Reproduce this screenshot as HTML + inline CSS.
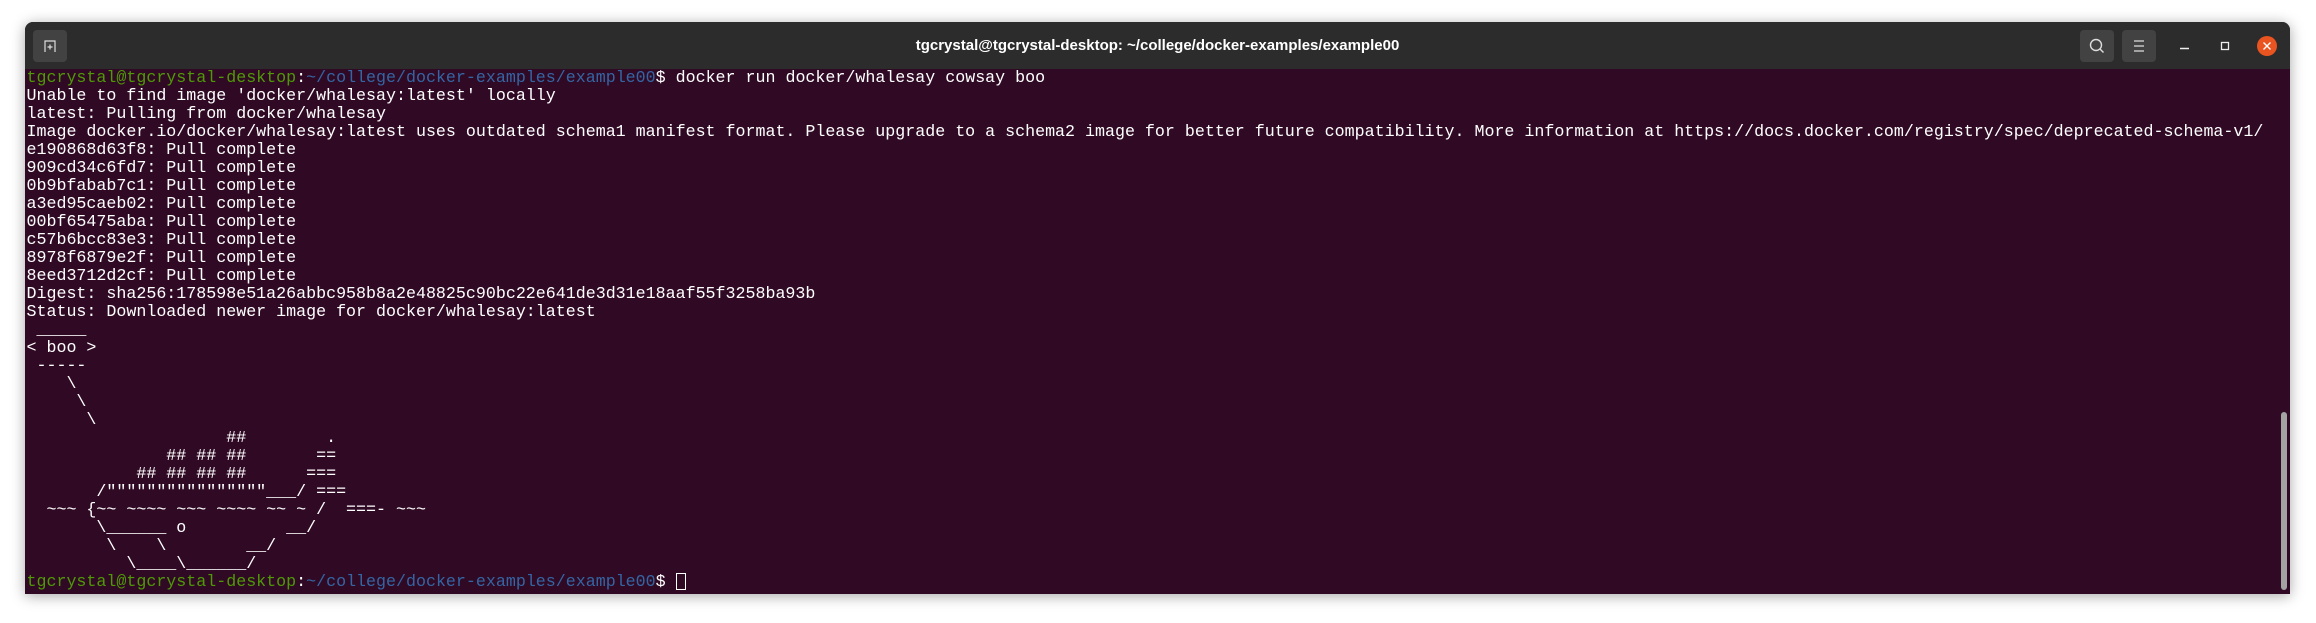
<!DOCTYPE html>
<html><head><meta charset="utf-8"><style>
html,body{margin:0;padding:0;background:#fff;width:2316px;height:623px;overflow:hidden}
.win{position:absolute;left:25px;top:22px;width:2265px;height:572px;background:#300a24;border-radius:8px 8px 0 0;box-shadow:0 2px 14px rgba(0,0,0,.35);overflow:hidden}
.tb{position:absolute;left:0;top:0;width:100%;height:47px;background:#2c2c2c}
.title{position:absolute;left:0;width:100%;top:15px;text-align:center;color:#fff;font:bold 15px "Liberation Sans",sans-serif}
.btn{position:absolute;top:8px;width:34px;height:32px;background:#424242;border-radius:4px}
.term{position:absolute;left:1.5px;top:47px;font-family:"Liberation Mono",monospace;font-size:16.65px;line-height:18px;color:#fff;white-space:pre}
.g{color:#4e9a06}.b{color:#3465a4}
.sb{position:absolute;left:2256px;top:390px;width:6px;height:178px;background:#a3a3a3;border-radius:3px}
</style></head><body>
<div class="win">
<div class="tb">
<div class="btn" style="left:8px"><svg width="34" height="32"><path d="M12 22V11h10v11M14.5 17h5M17 14.5v5" stroke="#ddd" stroke-width="1.2" fill="none"/></svg></div>
<div class="title">tgcrystal@tgcrystal-desktop: ~/college/docker-examples/example00</div>
<div class="btn" style="left:2055px"><svg width="34" height="32"><circle cx="16" cy="15" r="5.5" stroke="#ddd" stroke-width="1.4" fill="none"/><path d="M20 19l3.5 3.5" stroke="#ddd" stroke-width="1.4"/></svg></div>
<div class="btn" style="left:2097px"><svg width="34" height="32"><path d="M12 11h10M12 16h10M12 21h10" stroke="#ddd" stroke-width="1.2"/></svg></div>
<svg style="position:absolute;left:2152px;top:8px" width="113" height="32"><path d="M3 18.5h9" stroke="#eee" stroke-width="1.4"/><rect x="44.5" y="12.5" width="7" height="7" stroke="#eee" stroke-width="1.3" fill="none"/><circle cx="90" cy="16" r="10" fill="#e95420"/><path d="M86.5 12.5l7 7M93.5 12.5l-7 7" stroke="#fff" stroke-width="1.4"/></svg>
</div>
<div class="term"><span class="g">tgcrystal@tgcrystal-desktop</span>:<span class="b">~/college/docker-examples/example00</span>$ docker run docker/whalesay cowsay boo
Unable to find image 'docker/whalesay:latest' locally
latest: Pulling from docker/whalesay
Image docker.io/docker/whalesay:latest uses outdated schema1 manifest format. Please upgrade to a schema2 image for better future compatibility. More information at https://docs.docker.com/registry/spec/deprecated-schema-v1/
e190868d63f8: Pull complete
909cd34c6fd7: Pull complete
0b9bfabab7c1: Pull complete
a3ed95caeb02: Pull complete
00bf65475aba: Pull complete
c57b6bcc83e3: Pull complete
8978f6879e2f: Pull complete
8eed3712d2cf: Pull complete
Digest: sha256:178598e51a26abbc958b8a2e48825c90bc22e641de3d31e18aaf55f3258ba93b
Status: Downloaded newer image for docker/whalesay:latest
 _____ 
&lt; boo &gt;
 ----- 
    \
     \
      \    
                    ##        .            
              ## ## ##       ==            
           ## ## ## ##      ===            
       /""""""""""""""""___/ ===        
  ~~~ {~~ ~~~~ ~~~ ~~~~ ~~ ~ /  ===- ~~~   
       \______ o          __/            
        \    \        __/             
          \____\______/   
<span class="g">tgcrystal@tgcrystal-desktop</span>:<span class="b">~/college/docker-examples/example00</span>$ <span style="display:inline-block;width:10px;height:17px;border:1px solid #fff;vertical-align:-4px;box-sizing:border-box"></span></div>
<div class="sb"></div>
</div>
</body></html>
